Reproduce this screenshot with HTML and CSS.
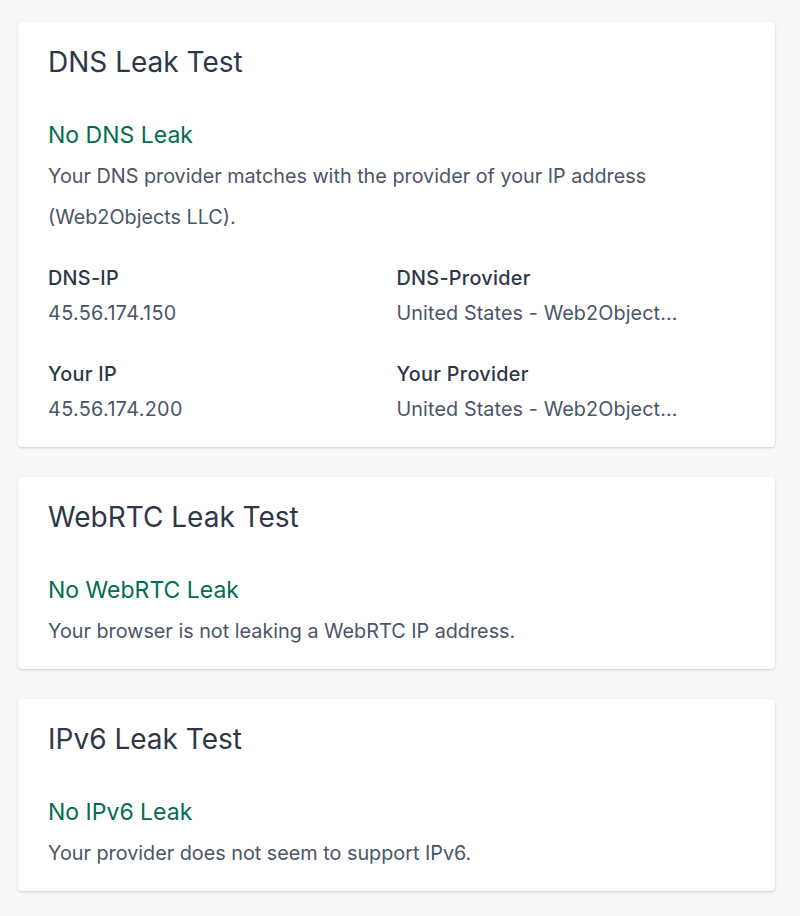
FILE: index.html
```html
<!DOCTYPE html>
<html lang="en">
<head>
<meta charset="utf-8">
<title>Leak Tests</title>
<link rel="stylesheet" href="styles.css">
</head>
<body>
<main class="page">
  <section class="card">
    <h2 class="card-title">DNS Leak Test</h2>
    <h3 class="status">No DNS Leak</h3>
    <p class="desc">Your DNS provider matches with the provider of your IP address (Web2Objects LLC).</p>
    <div class="facts">
      <div class="fact">
        <div class="label">DNS-IP</div>
        <div class="value num">45.56.174.150</div>
      </div>
      <div class="fact">
        <div class="label">DNS-Provider</div>
        <div class="value">United States - Web2Object...</div>
      </div>
      <div class="fact">
        <div class="label">Your IP</div>
        <div class="value num">45.56.174.200</div>
      </div>
      <div class="fact">
        <div class="label">Your Provider</div>
        <div class="value">United States - Web2Object...</div>
      </div>
    </div>
  </section>
  <section class="card">
    <h2 class="card-title">WebRTC Leak Test</h2>
    <h3 class="status">No WebRTC Leak</h3>
    <p class="desc">Your browser is not leaking a WebRTC IP address.</p>
  </section>
  <section class="card">
    <h2 class="card-title">IPv6 Leak Test</h2>
    <h3 class="status">No IPv6 Leak</h3>
    <p class="desc">Your provider does not seem to support IPv6.</p>
  </section>
</main>
</body>
</html>
```
FILE: styles.css
```css
html, body {
  margin: 0;
  padding: 0;
  background: #f7f8fa;
}
body {
  font-family: Inter, "Noto Sans", "Liberation Sans", sans-serif;
  color: #2d3748;
}
.page {
  padding: 22px 25px 26px 18px;
  display: flex;
  flex-direction: column;
  gap: 30px;
}
.card {
  background: #fff;
  border-radius: 4px;
  box-shadow: 0 1px 3px rgba(0,0,0,0.12), 0 1px 2px rgba(0,0,0,0.06);
  padding: 20px 30px 17px;
}
.card-title {
  margin: 0;
  font-size: 28px;
  line-height: 40px;
  font-weight: 400;
  color: #2d3748;
}
.status {
  margin: 37px 0 0;
  font-size: 23px;
  line-height: 32px;
  font-weight: 400;
  color: #046c4e;
}
.desc {
  margin: 5px 0 0;
  font-size: 19.8px;
  line-height: 41px;
  color: #4a5568;
}
.facts {
  margin: 23px 0 3px;
  display: grid;
  grid-template-columns: 1fr 1fr;
  row-gap: 26px;
}
.label {
  font-size: 19.8px;
  line-height: 35px;
  font-weight: 500;
  letter-spacing: 0.3px;
  color: #2d3748;
}
.value {
  font-size: 19.8px;
  line-height: 35px;
  letter-spacing: 0.1px;
  color: #4a5568;
  white-space: nowrap;
}
.value.num {
  letter-spacing: 0.35px;
}
```
